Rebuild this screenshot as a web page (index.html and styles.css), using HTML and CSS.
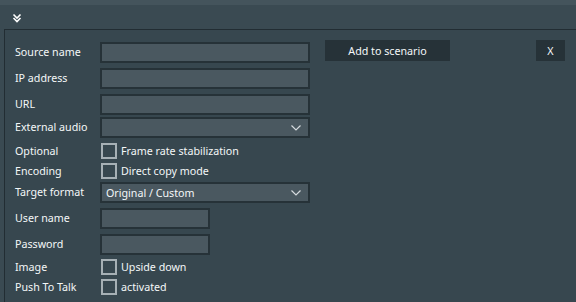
FILE: index.html
```html
<!DOCTYPE html>
<html lang="en">
<head>
    <meta charset="UTF-8">
    <title>Source</title>
    <link rel="stylesheet" href="styles.css">
</head>
<body>
<div class="top-strip"></div>
<div class="header">
    <svg class="collapse" width="10" height="10" viewBox="0 0 10 10">
        <path d="M1.5 1.5 L5 5 L8.5 1.5 M1.5 5 L5 8.5 L8.5 5" fill="none" stroke="#ffffff" stroke-width="1.6"/>
    </svg>
</div>
<div class="panel">
    <form class="form">
        <label class="lbl">Source name</label>
        <div class="ctrl first">
            <input class="field wide" type="text">
            <button type="button" class="btn add">Add to scenario</button>
            <button type="button" class="btn close">X</button>
        </div>

        <label class="lbl">IP address</label>
        <div class="ctrl"><input class="field wide" type="text"></div>

        <label class="lbl">URL</label>
        <div class="ctrl"><input class="field wide" type="text"></div>

        <label class="lbl">External audio</label>
        <div class="ctrl">
            <div class="field wide combo"><span></span><svg class="arrow" width="10" height="6" viewBox="0 0 10 6"><path d="M0.5 0.5 L5 5 L9.5 0.5" fill="none" stroke="#d5dadd" stroke-width="1.2"/></svg></div>
        </div>

        <label class="lbl small">Optional</label>
        <div class="ctrl"><label class="check"><span class="box"></span>Frame rate stabilization</label></div>

        <label class="lbl small">Encoding</label>
        <div class="ctrl"><label class="check"><span class="box"></span>Direct copy mode</label></div>

        <label class="lbl">Target format</label>
        <div class="ctrl">
            <div class="field wide combo"><span>Original / Custom</span><svg class="arrow" width="10" height="6" viewBox="0 0 10 6"><path d="M0.5 0.5 L5 5 L9.5 0.5" fill="none" stroke="#d5dadd" stroke-width="1.2"/></svg></div>
        </div>

        <label class="lbl">User name</label>
        <div class="ctrl"><input class="field short" type="text"></div>

        <label class="lbl">Password</label>
        <div class="ctrl"><input class="field short" type="password"></div>

        <label class="lbl small">Image</label>
        <div class="ctrl"><label class="check"><span class="box"></span>Upside down</label></div>

        <label class="lbl small">Push To Talk</label>
        <div class="ctrl"><label class="check"><span class="box"></span>activated</label></div>
    </form>
</div>
</body>
</html>
```

FILE: styles.css
```css
body {
    margin: 0;
    background-color: #3a4a52;
    font-family: "Noto Sans", Arial, sans-serif;
    font-size: 10.7px;
    color: #f4f7f8;
    overflow: hidden;
}

.top-strip {
    height: 5px;
    background-color: #44545c;
}

.header {
    height: 24px;
    display: flex;
    align-items: center;
    padding-left: 12px;
}
.collapse {
    margin-top: 2px;
}

.panel {
    margin-left: 4px;
    border-top: 1px solid #222d33;
    border-left: 1px solid #222d33;
    background-color: #37474f;
    height: 272px;
}

.form {
    display: grid;
    grid-template-columns: 85px 1fr;
    grid-template-rows: 26px 26px 23px 26px 20px 19px 26px 26px 25px 20px 20px;
    padding: 12px 0 0 10px;
}

.lbl {
    height: 21px;
    line-height: 20px;
    white-space: nowrap;
}
.lbl.small {
    height: 16px;
    line-height: 16px;
}

.ctrl {
    display: flex;
    align-items: flex-start;
}

.field {
    box-sizing: border-box;
    height: 21px;
    border: 2px solid #263238;
    background-color: #4a5860;
    color: #f4f7f8;
    font-family: inherit;
    font-size: 10.7px;
    padding: 0 5px;
    margin: 0;
    outline: none;
}
.wide {
    width: 210px;
}
.short {
    width: 110px;
}

.combo {
    display: flex;
    align-items: center;
    justify-content: space-between;
    padding: 0 7px 0 4px;
}
.arrow {
    margin-top: 1px;
}

.btn {
    height: 21px;
    margin-top: -2px;
    border: none;
    background-color: #263238;
    color: #f4f7f8;
    font-family: inherit;
    font-size: 10.7px;
    padding: 0;
}
.add {
    width: 125px;
    margin-left: 15px;
}
.close {
    width: 29px;
    margin-left: auto;
    margin-right: 11px;
}

.check {
    display: flex;
    align-items: center;
    height: 16px;
    line-height: 16px;
    white-space: nowrap;
}
.box {
    box-sizing: border-box;
    width: 16px;
    height: 16px;
    border: 2px solid #a6b0b5;
    margin: 0 4px 0 1px;
}
```
